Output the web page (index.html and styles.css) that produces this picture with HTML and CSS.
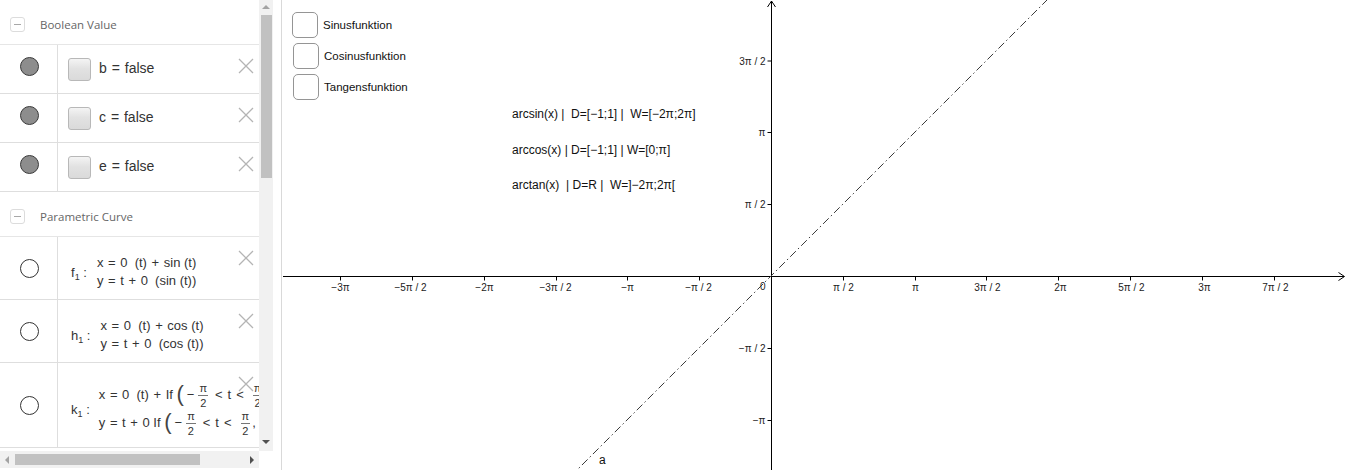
FILE: index.html
```html
<!DOCTYPE html>
<html lang="de">
<head>
<meta charset="utf-8">
<title>GeoGebra</title>
<link rel="stylesheet" href="styles.css">
</head>
<body>
<div class="app">
  <aside class="algebra">
    <div class="av-main">
      <div class="av-list">
        <div class="group-head"><span class="collapse"></span><span class="group-title">Boolean Value</span></div>

        <div class="row row-bool">
          <div class="marble-cell"><span class="marble filled"></span></div>
          <div class="content"><span class="cb"></span><span class="expr">b <span class="op">=</span> false</span></div>
          <span class="del"><svg viewBox="0 0 16 16" width="16" height="16"><path d="M1 1L15 15M15 1L1 15"/></svg></span>
        </div>
        <div class="row row-bool">
          <div class="marble-cell"><span class="marble filled"></span></div>
          <div class="content"><span class="cb"></span><span class="expr">c <span class="op">=</span> false</span></div>
          <span class="del"><svg viewBox="0 0 16 16" width="16" height="16"><path d="M1 1L15 15M15 1L1 15"/></svg></span>
        </div>
        <div class="row row-bool">
          <div class="marble-cell"><span class="marble filled"></span></div>
          <div class="content"><span class="cb"></span><span class="expr">e <span class="op">=</span> false</span></div>
          <span class="del"><svg viewBox="0 0 16 16" width="16" height="16"><path d="M1 1L15 15M15 1L1 15"/></svg></span>
        </div>

        <div class="group-head group-head-2"><span class="collapse"></span><span class="group-title">Parametric Curve</span></div>

        <div class="row row-param">
          <div class="marble-cell"><span class="marble"></span></div>
          <div class="content">
            <span class="lbl">f<span class="sub">1</span> :</span>
            <div class="lines">
              <div class="ln">x <span class="op">=</span> 0 &nbsp;(t) <span class="op">+</span> sin (t)</div>
              <div class="ln">y <span class="op">=</span> t <span class="op">+</span> 0 &nbsp;(sin (t))</div>
            </div>
          </div>
          <span class="del"><svg viewBox="0 0 16 16" width="16" height="16"><path d="M1 1L15 15M15 1L1 15"/></svg></span>
        </div>
        <div class="row row-param">
          <div class="marble-cell"><span class="marble"></span></div>
          <div class="content">
            <span class="lbl">h<span class="sub">1</span> :</span>
            <div class="lines">
              <div class="ln">x <span class="op">=</span> 0 &nbsp;(t) <span class="op">+</span> cos (t)</div>
              <div class="ln">y <span class="op">=</span> t <span class="op">+</span> 0 &nbsp;(cos (t))</div>
            </div>
          </div>
          <span class="del"><svg viewBox="0 0 16 16" width="16" height="16"><path d="M1 1L15 15M15 1L1 15"/></svg></span>
        </div>
        <div class="row row-param row-k">
          <div class="marble-cell"><span class="marble"></span></div>
          <div class="content">
            <span class="lbl">k<span class="sub">1</span> :</span>
            <div class="lines">
              <div class="ln ln-k">x <span class="op">=</span> 0 &nbsp;(t) <span class="op">+</span> If <span class="bigp">(</span>−<span class="frac"><span class="num">π</span><span class="den">2</span></span><span class="rel">&lt;</span>t<span class="rel">&lt;</span><span class="frac"><span class="num">π</span><span class="den">2</span></span></div>
              <div class="ln ln-k">y <span class="op">=</span> t <span class="op">+</span> 0 If <span class="bigp">(</span>−<span class="frac"><span class="num">π</span><span class="den">2</span></span><span class="rel">&lt;</span>t<span class="rel">&lt;</span><span class="frac"><span class="num">π</span><span class="den">2</span></span>, t</div>
            </div>
          </div>
          <span class="del"><svg viewBox="0 0 16 16" width="16" height="16"><path d="M1 1L15 15M15 1L1 15"/></svg></span>
        </div>
      </div>
      <div class="vscroll">
        <span class="sarrow"><span class="tri tri-up"></span></span>
        <span class="vthumb"></span>
        <span class="sfill"></span>
        <span class="sarrow"><span class="tri tri-down"></span></span>
      </div>
      <div class="av-gap"></div>
    </div>
    <div class="hscroll-row">
      <div class="hscroll">
        <span class="sarrow"><span class="tri tri-left"></span></span>
        <span class="hthumb"></span>
        <span class="sfill"></span>
        <span class="sarrow"><span class="tri tri-right"></span></span>
      </div>
    </div>
  </aside>

  <main class="graphics">
    <svg class="plot" viewBox="282 0 1065 470" width="1065" height="470">
      <g class="axes">
        <line x1="283" y1="276.5" x2="1344" y2="276.5"/>
        <polyline points="1338.5,272.5 1344.5,276.5 1338.5,280.5"/>
        <line x1="771.5" y1="470" x2="771.5" y2="1"/>
        <polyline points="767.5,7 771.5,1 775.5,7"/>
        <path d="M340.5 276.5v4M412.5 276.5v4M484.5 276.5v4M556.5 276.5v4M627.5 276.5v4M699.5 276.5v4M843.5 276.5v4M915.5 276.5v4M986.5 276.5v4M1058.5 276.5v4M1130.5 276.5v4M1202.5 276.5v4M1274.5 276.5v4"/>
        <path d="M767.5 61h4M767.5 132.5h4M767.5 204.5h4M767.5 348.5h4M767.5 420.5h4"/>
      </g>
      <g class="xlabels">
        <text x="340.5" y="291">−3π</text>
        <text x="410.5" y="291">−5π / 2</text>
        <text x="484.5" y="291">−2π</text>
        <text x="555.5" y="291">−3π / 2</text>
        <text x="627.5" y="291">−π</text>
        <text x="698.5" y="291">−π / 2</text>
        <text x="843.5" y="291">π / 2</text>
        <text x="915.5" y="291">π</text>
        <text x="987.5" y="291">3π / 2</text>
        <text x="1060.5" y="291">2π</text>
        <text x="1131.5" y="291">5π / 2</text>
        <text x="1204.5" y="291">3π</text>
        <text x="1275.5" y="291">7π / 2</text>
      </g>
      <g class="ylabels">
        <text x="765.5" y="64.5">3π / 2</text>
        <text x="765.5" y="136">π</text>
        <text x="765.5" y="208">π / 2</text>
        <text x="765.5" y="352">−π / 2</text>
        <text x="765.5" y="424">−π</text>
        <text x="765.5" y="290">0</text>
      </g>
      <line class="fn-a" x1="571" y1="476" x2="1053" y2="-6"/>
      <text class="obj-label" x="599" y="463.5">a</text>
    </svg>

    <label class="gcb gcb1"><span class="gbox"></span><span class="gcb-text">Sinusfunktion</span></label>
    <label class="gcb gcb2"><span class="gbox"></span><span class="gcb-text">Cosinusfunktion</span></label>
    <label class="gcb gcb3"><span class="gbox"></span><span class="gcb-text">Tangensfunktion</span></label>

    <div class="gtext gt1">arcsin(x) |&nbsp; D=[−1;1] |&nbsp; W=[−2π;2π]</div>
    <div class="gtext gt2">arccos(x) | D=[−1;1] | W=[0;π]</div>
    <div class="gtext gt3">arctan(x) &nbsp;| D=R |&nbsp; W=]−2π;2π[</div>
  </main>
</div>
</body>
</html>
```

FILE: styles.css
```css
* { box-sizing: border-box; }
html, body { margin: 0; padding: 0; }
body {
  width: 1347px;
  height: 470px;
  overflow: hidden;
  background: #fff;
  font-family: "Liberation Sans", Arial, sans-serif;
  color: #222;
}
.app { display: flex; height: 470px; }

/* ---------- algebra view ---------- */
.algebra {
  width: 281px;
  flex: none;
  display: flex;
  flex-direction: column;
  background: #fff;
}
.av-main { display: flex; height: 451px; }
.av-list {
  width: 259px;
  height: 451px;
  overflow: hidden;
  flex: none;
}
.av-gap { width: 8px; flex: none; }

.group-head {
  height: 45px;
  display: flex;
  align-items: center;
  padding: 4px 0 0 10px;
  border-bottom: 1px solid #e6e6e6;
}
.group-head-2 { padding-top: 4px; }
.collapse {
  width: 15px;
  height: 15px;
  border: 1px solid #dcdcdc;
  border-radius: 3px;
  display: flex;
  align-items: center;
  justify-content: center;
  margin-right: 15px;
}
.collapse::before {
  content: "";
  width: 7px;
  height: 1px;
  background: #a8a8a8;
}
.group-title {
  font-family: "Open Sans", "Liberation Sans", sans-serif;
  font-size: 11.5px;
  color: #666;
}

.row {
  position: relative;
  display: flex;
  border-bottom: 1px solid #dedede;
}
.row-bool { height: 49px; }
.row-param { height: 63px; }
.row-k { height: 85px; }

.marble-cell {
  width: 57px;
  flex: none;
  display: flex;
  align-items: center;
  justify-content: center;
  padding-left: 1px;
}
.marble {
  width: 19px;
  height: 19px;
  border-radius: 50%;
  border: 1px solid #333;
  background: #fff;
}
.marble.filled { background: #8d8d8d; border-color: #3a3a3a; margin-bottom: 5px; }

.content {
  flex: 1;
  min-width: 0;
  display: flex;
  align-items: center;
  border-left: 1px solid #dedede;
  overflow: hidden;
  white-space: nowrap;
}
.row-bool .content { padding-left: 10px; }
.cb {
  width: 23px;
  height: 23px;
  flex: none;
  border: 1px solid #b8b8b8;
  border-radius: 3px;
  background: linear-gradient(#f4f4f4, #e2e2e2 45%, #dadada);
  margin: 1px 8px 0 0;
}
.expr { font-size: 14px; color: #333; margin-top: -2px; }
.op { margin: 0 1px; }
.rel { margin: 0 5px; }

.row-param .content { padding-left: 13px; }
.lbl {
  font-size: 13px;
  color: #333;
  margin: 8px 9px 0 0;
  flex: none;
}
.sub { font-size: 9px; position: relative; top: 3px; }
.lines { display: flex; flex-direction: column; margin-top: 8px; margin-left: 1px; }
.ln {
  font-size: 13px;
  line-height: 18px;
  color: #333;
  white-space: nowrap;
}
.row-k .lines { margin-top: 6px; margin-left: 0; }
.ln-k { line-height: 28px; height: 28px; }
.bigp {
  font-size: 22px;
  font-weight: 300;
  vertical-align: -2px;
  color: #444;
  margin-right: 3px;
}
.frac {
  display: inline-flex;
  flex-direction: column;
  align-items: center;
  vertical-align: middle;
  font-size: 11px;
  line-height: 11px;
  margin: 0 2px 0 4px;
}
.frac .num { padding: 0 1px 1px; border-bottom: 1px solid #777; }
.frac .den { padding-top: 2px; }

.del {
  position: absolute;
  top: 13px;
  right: 5px;
  width: 16px;
  height: 16px;
}
.del svg { display: block; }
.del path { stroke: #b4b4b4; stroke-width: 1.3; fill: none; }

/* scrollbars */
.vscroll {
  width: 14px;
  flex: none;
  background: #f1f1f1;
  display: flex;
  flex-direction: column;
  align-items: center;
}
.sarrow {
  width: 14px;
  height: 14px;
  flex: none;
  display: flex;
  align-items: center;
  justify-content: center;
}
.sfill { flex: 1; }
.vthumb {
  width: 11px;
  height: 163px;
  background: #c1c1c1;
  margin-top: 1px;
  flex: none;
}
.hscroll-row { height: 17px; display: flex; }
.hscroll {
  width: 259px;
  height: 17px;
  background: #f1f1f1;
  display: flex;
  align-items: center;
}
.hthumb {
  width: 185px;
  height: 11px;
  background: #c1c1c1;
  margin-left: 1px;
  flex: none;
}
.tri { width: 0; height: 0; border: 4px solid transparent; }
.tri-up { border-bottom-color: #a3a3a3; border-top-width: 0; }
.tri-down { border-top-color: #505050; border-bottom-width: 0; margin-top: -4px; }
.tri-left { border-right-color: #a3a3a3; border-left-width: 0; }
.tri-right { border-left-color: #505050; border-right-width: 0; }

/* ---------- graphics view ---------- */
.graphics {
  flex: 1;
  position: relative;
  border-left: 1px solid #d9d9d9;
  overflow: hidden;
}
.plot { display: block; }
.axes line, .axes polyline, .axes path {
  stroke: #000;
  stroke-width: 1;
  fill: none;
}
.xlabels text, .ylabels text {
  font-family: "Liberation Sans", Arial, sans-serif;
  font-size: 10px;
  fill: #222;
}
.xlabels text { text-anchor: middle; }
.ylabels text { text-anchor: end; }
.fn-a {
  stroke: #3a3a3a;
  stroke-width: 1;
  stroke-dasharray: 8 3 1.5 3;
}
.obj-label {
  font-family: "Liberation Sans", Arial, sans-serif;
  font-size: 12px;
  fill: #111;
}

.gcb {
  position: absolute;
  display: flex;
  align-items: center;
}
.gcb1 { left: 10px; top: 12px; }
.gcb2 { left: 11px; top: 43px; }
.gcb3 { left: 11px; top: 74px; }
.gbox {
  width: 26px;
  height: 26px;
  border: 1.5px solid #959595;
  border-radius: 5px;
  background: #fff;
  margin-right: 5px;
}
.gcb-text {
  font-size: 11.5px;
  color: #111;
}
.gtext {
  position: absolute;
  left: 230px;
  font-size: 12px;
  line-height: 14px;
  color: #111;
  white-space: nowrap;
}
.gt1 { top: 107px; }
.gt2 { top: 143px; }
.gt3 { top: 178px; }
```
